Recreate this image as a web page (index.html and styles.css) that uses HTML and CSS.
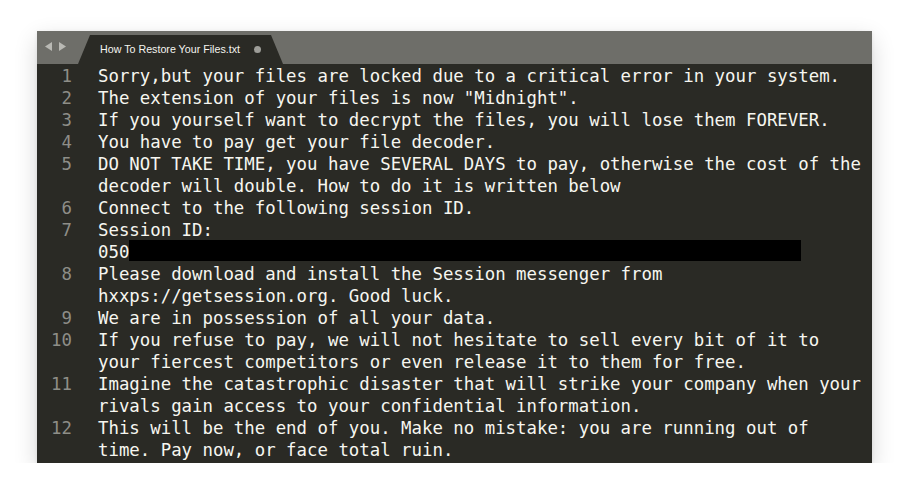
FILE: index.html
```html
<!DOCTYPE html>
<html lang="en">
<head>
<meta charset="utf-8">
<title>How To Restore Your Files.txt</title>
<link rel="stylesheet" href="styles.css">
</head>
<body>
<div class="window">
  <div class="tabbar">
    <div class="nav">
      <svg class="arrows" width="22" height="9" viewBox="0 0 22 9">
        <polygon points="7,0 7,9 0,4.5" fill="#b9b9b4"/>
        <polygon points="14,0 14,9 21,4.5" fill="#b9b9b4"/>
      </svg>
    </div>
    <div class="tab">
      <span class="tab-title">How To Restore Your Files.txt</span>
      <span class="tab-dot"></span>
    </div>
  </div>
  <div class="editor">
    <div class="ln">1</div><div class="code">Sorry,but your files are locked due to a critical error in your system.</div>
    <div class="ln">2</div><div class="code">The extension of your files is now "Midnight".</div>
    <div class="ln">3</div><div class="code">If you yourself want to decrypt the files, you will lose them FOREVER.</div>
    <div class="ln">4</div><div class="code">You have to pay get your file decoder.</div>
    <div class="ln">5</div><div class="code">DO NOT TAKE TIME, you have SEVERAL DAYS to pay, otherwise the cost of the decoder will double. How to do it is written below</div>
    <div class="ln">6</div><div class="code">Connect to the following session ID.</div>
    <div class="ln">7</div><div class="code">Session ID:<br>050<span class="redact"></span></div>
    <div class="ln">8</div><div class="code">Please download and install the Session messenger from hxxps://getsession.org. Good luck.</div>
    <div class="ln">9</div><div class="code">We are in possession of all your data.</div>
    <div class="ln">10</div><div class="code">If you refuse to pay, we will not hesitate to sell every bit of it to your fiercest competitors or even release it to them for free.</div>
    <div class="ln">11</div><div class="code">Imagine the catastrophic disaster that will strike your company when your rivals gain access to your confidential information.</div>
    <div class="ln">12</div><div class="code">This will be the end of you. Make no mistake: you are running out of time. Pay now, or face total ruin.</div>
  </div>
</div>
</body>
</html>
```

FILE: styles.css
```css
html, body {
  margin: 0;
  padding: 0;
  background: #ffffff;
}

body {
  padding: 31px 37px 0 37px;
}

.window {
  width: 835px;
  height: 432px;
  background: #2a2a25;
  box-shadow: 0 8px 22px rgba(0, 0, 0, 0.16), 0 1px 4px rgba(0, 0, 0, 0.08);
  display: flex;
  flex-direction: column;
}

.tabbar {
  height: 33px;
  background: #6e6e69;
  display: flex;
  align-items: flex-end;
  flex: none;
}

.nav {
  width: 41px;
  height: 33px;
  display: flex;
  align-items: flex-start;
  padding-left: 8px;
  box-sizing: border-box;
}

.arrows {
  margin-top: 11px;
}

.tab {
  width: 205px;
  height: 29px;
  background: #2a2a25;
  clip-path: polygon(12px 0, 193px 0, 205px 100%, 0 100%);
  display: flex;
  align-items: center;
  padding-left: 22px;
  padding-bottom: 2px;
  box-sizing: border-box;
}

.tab-title {
  font-family: "Liberation Sans", Arial, sans-serif;
  font-size: 10.7px;
  color: #f4f4ef;
  white-space: nowrap;
}

.tab-dot {
  width: 7px;
  height: 7px;
  border-radius: 50%;
  background: #9d9d98;
  margin-left: 14px;
  margin-top: 1px;
}

.editor {
  display: grid;
  grid-template-columns: 35px 74ch;
  column-gap: 26px;
  align-content: start;
  padding-top: 1px;
  font-family: "DejaVu Sans Mono", "Liberation Mono", monospace;
  font-size: 17.36px;
  line-height: 22px;
  color: #f6f6f0;
}

.ln {
  text-align: right;
  color: #8e8e88;
}

.code {
  width: 73.6ch;
  white-space: pre-wrap;
  word-wrap: break-word;
}

.redact {
  display: inline-block;
  width: 672px;
  height: 21px;
  background: #000000;
  vertical-align: top;
  margin-top: -1px;
}
```
